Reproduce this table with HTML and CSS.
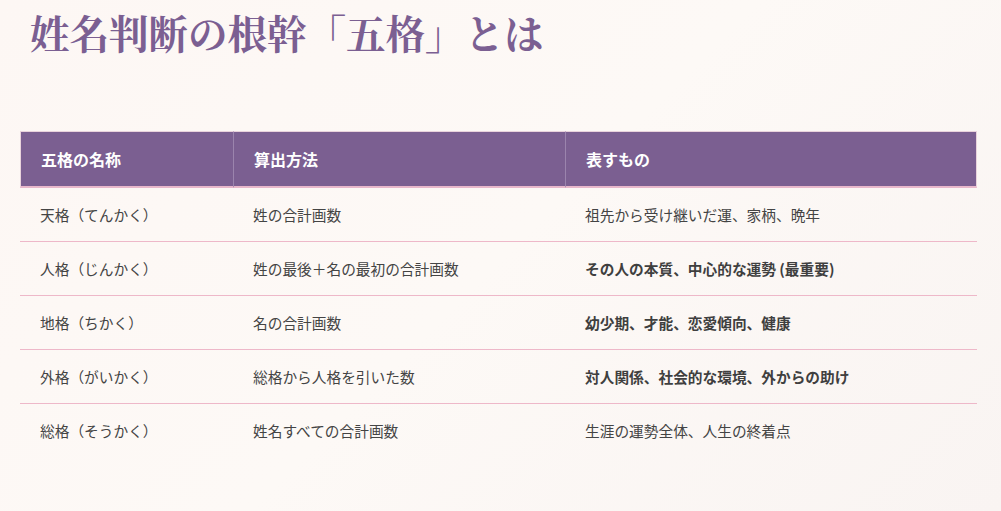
FILE: index.html
```html
<!DOCTYPE html>
<html lang="ja">
<head>
<meta charset="utf-8">
<link rel="stylesheet" href="styles.css">
</head>
<body>
<main class="page">
  <h1 class="title">姓名判断の根幹「五格」とは</h1>
  <table class="gokaku">
    <thead>
      <tr>
        <th class="c1">五格の名称</th>
        <th class="c2">算出方法</th>
        <th class="c3">表すもの</th>
      </tr>
    </thead>
    <tbody>
      <tr><td>天格（てんかく）</td><td>姓の合計画数</td><td>祖先から受け継いだ運、家柄、晩年</td></tr>
      <tr><td>人格（じんかく）</td><td>姓の最後＋名の最初の合計画数</td><td class="strong">その人の本質、中心的な運勢 (最重要)</td></tr>
      <tr><td>地格（ちかく）</td><td>名の合計画数</td><td class="strong">幼少期、才能、恋愛傾向、健康</td></tr>
      <tr><td>外格（がいかく）</td><td>総格から人格を引いた数</td><td class="strong">対人関係、社会的な環境、外からの助け</td></tr>
      <tr><td>総格（そうかく）</td><td>姓名すべての合計画数</td><td>生涯の運勢全体、人生の終着点</td></tr>
    </tbody>
  </table>
</main>
</body>
</html>
```

FILE: styles.css
```css
html, body {
  margin: 0;
  padding: 0;
}
body {
  width: 1001px;
  height: 511px;
  overflow: hidden;
  background: linear-gradient(135deg, #fdf7f4 0%, #fdf9f6 50%, #f9f4f2 100%);
  font-family: "Noto Sans CJK JP", "Noto Sans", sans-serif;
  color: #444;
}
.page {
  padding: 0 24px 0 20px;
}
.title {
  margin: 0;
  padding: 8px 0 0 10px;
  font-family: "Noto Serif CJK JP", "Liberation Serif", "Noto Sans CJK JP", serif;
  font-size: 39.5px;
  font-weight: 700;
  line-height: 48px;
  color: #7b5f92;
  letter-spacing: 0;
}
.gokaku {
  margin-top: 75px;
  width: 957px;
  border-collapse: separate;
  border-spacing: 0;
  font-size: 14.7px;
  line-height: 20px;
}
.gokaku th {
  background: #7b5f91;
  color: #fff;
  font-size: 16px;
  font-weight: 700;
  text-align: left;
  height: 54px;
  padding: 0 20px;
  border-top: 1px solid #e9d3dc;
  border-bottom: 2px solid #e8b7cb;
  border-left: 1px solid #9b84ad;
}
.gokaku th.c1 { width: 172px; border-left: 1px solid #e9d3dc; }
.gokaku th.c2 { width: 291px; }
.gokaku th.c3 { border-right: 1px solid #e9d3dc; }
.gokaku td {
  height: 53px;
  padding: 0 20px;
  border-bottom: 1px solid #eeb8c9;
}
.gokaku tbody tr:last-child td { border-bottom: none; }
.gokaku td.strong {
  font-weight: 700;
  color: #3f3f3f;
}
```
